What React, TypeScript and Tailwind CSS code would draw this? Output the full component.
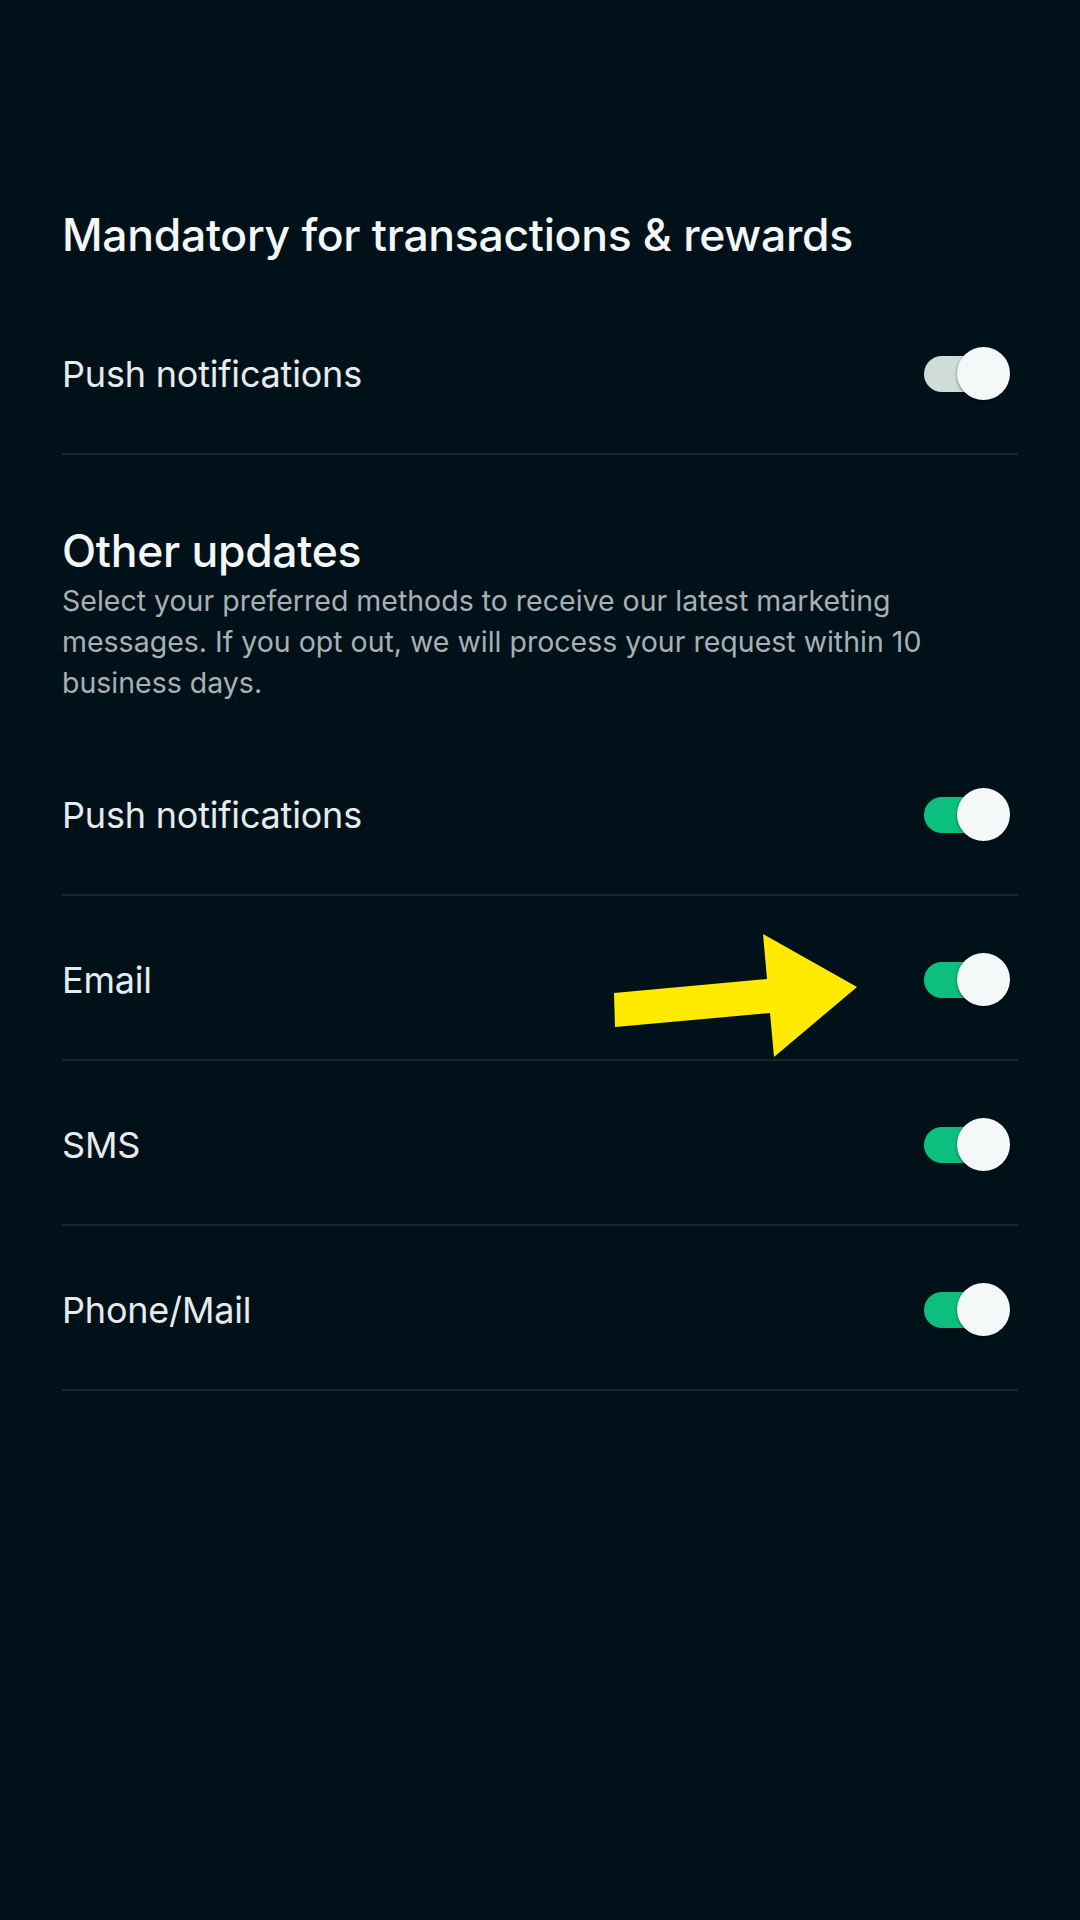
import React from "react";

function Toggle({ on }: { on: "gray" | "green" }) {
  return (
    <div className="relative w-[86px] h-[54px] mr-[8px] mt-[5px] shrink-0">
      <div
        className={
          on === "green"
            ? "absolute left-0 top-[9px] w-[78px] h-[36px] rounded-full bg-[#0dbf7e]"
            : "absolute left-0 top-[9px] w-[78px] h-[36px] rounded-full bg-[#cfdcda]"
        }
      />
      <div className="absolute right-0 top-0 w-[53px] h-[53px] rounded-full bg-[#f4f8f9] shadow-[0_1px_3px_rgba(0,0,0,0.5)]" />
    </div>
  );
}

function Row({ label, on }: { label: string; on: "gray" | "green" }) {
  return (
    <div className="flex items-center justify-between h-[165px] border-b-2 border-[#17252d]">
      <span className="text-[36px] text-[#e6ecee] tracking-[-0.2px] pt-[4px]">{label}</span>
      <Toggle on={on} />
    </div>
  );
}

export default function App() {
  return (
    <div
      className="relative w-[1080px] min-h-[1920px] bg-[#01111a]"
      style={{ fontFamily: "Inter, 'Noto Sans', sans-serif" }}
    >
      <div className="px-[62px] pt-[209px]">
        <h2 className="text-[44.5px] leading-[52px] font-medium text-[#f3f7f8] tracking-[-0.3px]">
          Mandatory for transactions &amp; rewards
        </h2>
        <div className="mt-[29px]">
          <Row label="Push notifications" on="gray" />
        </div>
        <h2 className="mt-[70px] text-[44.5px] leading-[52px] font-medium text-[#f3f7f8] tracking-[-0.3px]">
          Other updates
        </h2>
        <p className="mt-[3px] text-[28.5px] leading-[41px] text-[#a7b0b4]">
          Select your preferred methods to receive our latest marketing messages. If you opt out, we will process your
          request within 10 business days.
        </p>
        <div className="mt-[28px]">
          <Row label="Push notifications" on="green" />
          <Row label="Email" on="green" />
          <Row label="SMS" on="green" />
          <Row label="Phone/Mail" on="green" />
        </div>
      </div>
      <svg
        className="absolute left-0 top-0 pointer-events-none"
        width="1080"
        height="1920"
        viewBox="0 0 1080 1920"
      >
        <polygon
          points="614,993 767,979 763,934 857,987 774,1057 770,1013 615,1027"
          fill="#ffea00"
        />
      </svg>
    </div>
  );
}
